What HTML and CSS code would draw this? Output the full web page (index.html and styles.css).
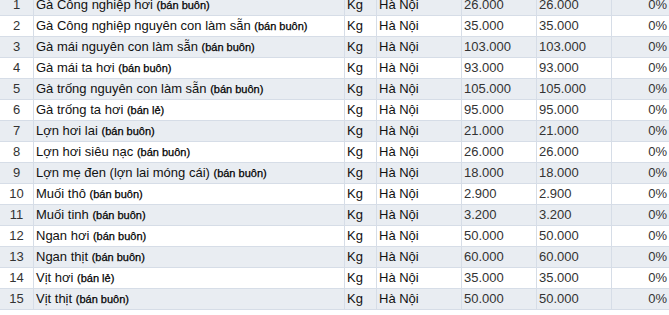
FILE: index.html
```html
<!DOCTYPE html>
<html lang="vi">
<head>
<meta charset="utf-8">
<link rel="stylesheet" href="styles.css">
</head>
<body>
<div class="viewport">
<table class="prices">
<colgroup>
<col class="c-no"><col class="c-name"><col class="c-unit"><col class="c-place"><col class="c-p1"><col class="c-p2"><col class="c-pct">
</colgroup>
<tbody>
<tr><td class="no">1</td><td>Gà Công nghiệp hơi <small>(bán buôn)</small></td><td>Kg</td><td>Hà Nội</td><td class="num">26.000</td><td class="num">26.000</td><td class="pct">0%</td></tr>
<tr><td class="no">2</td><td>Gà Công nghiệp nguyên con làm sẵn <small>(bán buôn)</small></td><td>Kg</td><td>Hà Nội</td><td class="num">35.000</td><td class="num">35.000</td><td class="pct">0%</td></tr>
<tr><td class="no">3</td><td>Gà mái nguyên con làm sẵn <small>(bán buôn)</small></td><td>Kg</td><td>Hà Nội</td><td class="num">103.000</td><td class="num">103.000</td><td class="pct">0%</td></tr>
<tr><td class="no">4</td><td>Gà mái ta hơi <small>(bán buôn)</small></td><td>Kg</td><td>Hà Nội</td><td class="num">93.000</td><td class="num">93.000</td><td class="pct">0%</td></tr>
<tr><td class="no">5</td><td>Gà trống nguyên con làm sẵn <small>(bán buôn)</small></td><td>Kg</td><td>Hà Nội</td><td class="num">105.000</td><td class="num">105.000</td><td class="pct">0%</td></tr>
<tr><td class="no">6</td><td>Gà trống ta hơi <small>(bán lẻ)</small></td><td>Kg</td><td>Hà Nội</td><td class="num">95.000</td><td class="num">95.000</td><td class="pct">0%</td></tr>
<tr><td class="no">7</td><td>Lợn hơi lai <small>(bán buôn)</small></td><td>Kg</td><td>Hà Nội</td><td class="num">21.000</td><td class="num">21.000</td><td class="pct">0%</td></tr>
<tr><td class="no">8</td><td>Lợn hơi siêu nạc <small>(bán buôn)</small></td><td>Kg</td><td>Hà Nội</td><td class="num">26.000</td><td class="num">26.000</td><td class="pct">0%</td></tr>
<tr><td class="no">9</td><td>Lợn mẹ đen (lợn lai móng cái) <small>(bán buôn)</small></td><td>Kg</td><td>Hà Nội</td><td class="num">18.000</td><td class="num">18.000</td><td class="pct">0%</td></tr>
<tr><td class="no">10</td><td>Muối thô <small>(bán buôn)</small></td><td>Kg</td><td>Hà Nội</td><td class="num">2.900</td><td class="num">2.900</td><td class="pct">0%</td></tr>
<tr><td class="no">11</td><td>Muối tinh <small>(bán buôn)</small></td><td>Kg</td><td>Hà Nội</td><td class="num">3.200</td><td class="num">3.200</td><td class="pct">0%</td></tr>
<tr><td class="no">12</td><td>Ngan hơi <small>(bán buôn)</small></td><td>Kg</td><td>Hà Nội</td><td class="num">50.000</td><td class="num">50.000</td><td class="pct">0%</td></tr>
<tr><td class="no">13</td><td>Ngan thịt <small>(bán buôn)</small></td><td>Kg</td><td>Hà Nội</td><td class="num">60.000</td><td class="num">60.000</td><td class="pct">0%</td></tr>
<tr><td class="no">14</td><td>Vịt hơi <small>(bán lẻ)</small></td><td>Kg</td><td>Hà Nội</td><td class="num">35.000</td><td class="num">35.000</td><td class="pct">0%</td></tr>
<tr><td class="no">15</td><td>Vịt thịt <small>(bán buôn)</small></td><td>Kg</td><td>Hà Nội</td><td class="num">50.000</td><td class="num">50.000</td><td class="pct">0%</td></tr>
</tbody>
</table>
</div>
</body>
</html>
```

FILE: styles.css
```css
html, body {
  margin: 0;
  padding: 0;
  background: #ffffff;
}

.viewport {
  width: 669px;
  height: 315px;
  overflow: hidden;
}

.prices {
  margin-top: -5px;
  width: 669px;
  table-layout: fixed;
  border-collapse: separate;
  border-spacing: 0;
  font-family: "Liberation Sans", Arial, sans-serif;
  font-size: 13px;
  color: #111111;
}

.c-no { width: 34px; }
.c-name { width: 311px; }
.c-unit { width: 32px; }
.c-place { width: 85px; }
.c-p1 { width: 75px; }
.c-p2 { width: 75px; }
.c-pct { width: 57px; }

.prices td {
  padding: 0 2px;
  line-height: 20px;
  height: 20px;
  border-bottom: 1px solid #d6dde7;
  border-right: 1px solid #d6dde7;
  white-space: nowrap;
  overflow: hidden;
  vertical-align: middle;
}

.prices td:last-child {
  border-right: none;
}

.prices tr:nth-child(odd) td {
  background: #e9edf2;
}

.prices td.no {
  text-align: center;
  color: #333333;
}

.prices td.num {
  color: #333333;
}

.prices td.pct {
  text-align: right;
  color: #333333;
}

.prices small {
  font-size: 11px;
  color: #000000;
  -webkit-text-stroke: 0.25px #000000;
}
```
